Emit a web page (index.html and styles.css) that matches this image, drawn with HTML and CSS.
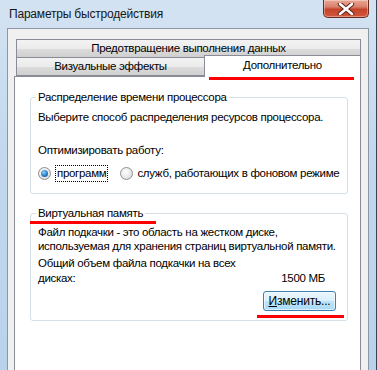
FILE: index.html
```html
<!DOCTYPE html>
<html lang="ru">
<head>
    <meta charset="UTF-8">
    <meta name="viewport" content="width=device-width, initial-scale=1.0">
    <title>Параметры быстродействия</title>
    <link rel="stylesheet" href="styles.css">
</head>
<body>

    <div class="window">
        <div class="titlebar">
            <span class="title">Параметры быстродействия</span>
            <div class="close-btn">
                <svg width="18" height="12" viewBox="0 0 18 12">
                    <path d="M3 1 L15 11 M15 1 L3 11" stroke="#5a1f14" stroke-width="4.5" stroke-linecap="round"/>
                    <path d="M3 1 L15 11 M15 1 L3 11" stroke="#ffffff" stroke-width="2.6" stroke-linecap="round"/>
                </svg>
            </div>
        </div>

        <div class="client">
            <div class="tabs">
                <div class="tab-row">
                    <div class="tab full">Предотвращение выполнения данных</div>
                </div>
                <div class="tab-row">
                    <div class="tab visual">Визуальные эффекты</div>
                    <div class="tab active">Дополнительно</div>
                </div>
            </div>

            <div class="panel">
                <!-- Процессор -->
                <fieldset class="group">
                    <legend>Распределение времени процессора</legend>
                    <p class="hint">Выберите способ распределения ресурсов процессора.</p>
                    <p class="optimize">Оптимизировать работу:</p>
                    <div class="radios">
                        <label class="radio checked"><span class="dot"></span><span class="focus">программ</span></label>
                        <label class="radio"><span class="dot"></span><span class="plain">служб, работающих в фоновом режиме</span></label>
                    </div>
                </fieldset>

                <!-- Виртуальная память -->
                <fieldset class="group vm">
                    <legend class="marked">Виртуальная память</legend>
                    <p class="hint">Файл подкачки - это область на жестком диске,<br>используемая для хранения страниц виртуальной памяти.</p>
                    <p class="total">Общий объем файла подкачки на всех</p>
                    <div class="total-row">
                        <span>дисках:</span>
                        <span>1500 МБ</span>
                    </div>
                    <div class="actions">
                        <button class="change-btn"><u>И</u>зменить...</button>
                    </div>
                </fieldset>
            </div>
        </div>
    </div>

</body>
</html>
```

FILE: styles.css
```css
body {
    margin: 0;
    width: 377px;
    height: 370px;
    overflow: hidden;
    font-family: "Liberation Sans", Arial, sans-serif;
    font-size: 11.5px;
    letter-spacing: -0.3px;
    line-height: 15px;
    color: #000;
    white-space: nowrap;
}

.window {
    height: 370px;
    display: flex;
    flex-direction: column;
    background: linear-gradient(to bottom, #d4e3f2 0%, #c3d8ee 40%, #b9d2ec 100%);
    border-right: 1px solid #3a4350;
    box-sizing: border-box;
}

.titlebar {
    height: 28px;
    display: flex;
    align-items: flex-start;
    justify-content: space-between;
    padding-left: 9px;
    flex-shrink: 0;
}

.title {
    margin-top: 7px;
    color: #151515;
    font-size: 12px;
    letter-spacing: -0.2px;
}

.close-btn {
    width: 46px;
    height: 18px;
    margin-right: 7px;
    box-sizing: border-box;
    border: 1px solid #6b2a1f;
    border-top: none;
    border-radius: 0 0 5px 5px;
    background: linear-gradient(to bottom, #e9a795 0%, #d9826c 40%, #c5432a 55%, #d2573c 100%);
    box-shadow: inset 0 0 0 1px rgba(255, 255, 255, 0.35);
    display: flex;
    justify-content: center;
    align-items: center;
}

.client {
    flex: 1;
    display: flex;
    flex-direction: column;
    margin: 0 7px 0 7px;
    padding: 10px 7px 0 6px;
    background-color: #f0f0f0;
    border: 1px solid #8b97a6;
    border-bottom: none;
    min-height: 0;
}

.tabs {
    margin-left: 2px;
    position: relative;
    z-index: 2;
}

.tab-row {
    display: flex;
    align-items: flex-end;
}

.tab {
    box-sizing: border-box;
    height: 19px;
    border: 1px solid #898c95;
    background: linear-gradient(to bottom, #f3f3f3 0%, #ebebeb 50%, #dddddd 51%, #cfcfcf 100%);
    text-align: center;
    line-height: 17px;
    color: #000;
}

.tab.full {
    flex: 1;
    height: 18px;
    border-bottom: none;
}

.tab.visual {
    width: 188px;
    border-right: none;
}

.tab.active {
    flex: 1;
    height: 22px;
    margin-top: -3px;
    margin-bottom: -1px;
    background: #ffffff;
    border-bottom: none;
    line-height: 19px;
    position: relative;
}

.tab.active::after {
    content: "";
    position: absolute;
    left: 4px;
    right: 6px;
    top: 21px;
    height: 3px;
    background: #f00;
}

.panel {
    flex: 1;
    background: #fff;
    border: 1px solid #898c95;
    border-bottom: none;
    margin-right: 0;
    padding: 13px 12px 0 15px;
}

.group {
    margin: 0;
    min-width: 0;
    padding: 0 7px 11px 7px;
    border: 1px solid #d5dfe5;
    border-radius: 3px;
}

.group legend {
    padding: 0 2px;
    margin-left: -2px;
    line-height: 15px;
}

.group p {
    margin: 0;
    line-height: 15px;
}

.hint {
    padding-top: 5px;
}

.vm .hint {
    line-height: 14px !important;
    padding-top: 4px;
}

.optimize {
    margin-top: 18px !important;
}

.radios {
    display: flex;
    align-items: center;
    margin-top: 7px;
    line-height: 15px;
}

.radio {
    display: flex;
    align-items: center;
}

.radio + .radio {
    margin-left: 12px;
}

.dot {
    width: 11px;
    height: 11px;
    border-radius: 50%;
    border: 1px solid #8f8f8f;
    background: radial-gradient(circle at 40% 35%, #ffffff 0%, #e6e6e6 60%, #cfcfcf 100%);
    margin-right: 4px;
    position: relative;
}

.radio.checked .dot::after {
    content: "";
    position: absolute;
    left: 2px;
    top: 2px;
    width: 7px;
    height: 7px;
    border-radius: 50%;
    background: radial-gradient(circle at 40% 35%, #8fd1fb 0%, #2b7cc8 55%, #133e78 100%);
}

.focus {
    border: 1px dotted #000;
    padding: 0 1px;
}

.vm {
    margin-top: 12px;
    padding-bottom: 9px;
}

.marked {
    position: relative;
}

.marked::after {
    content: "";
    position: absolute;
    left: -6px;
    right: -11px;
    top: 15px;
    height: 3px;
    background: #f00;
}

.total {
    margin-top: 3px !important;
}

.total-row {
    display: flex;
    justify-content: space-between;
    padding-right: 15px;
    line-height: 15px;
}

.actions {
    display: flex;
    justify-content: flex-end;
    margin-top: 5px;
    padding-right: 4px;
    position: relative;
}

.actions::after {
    content: "";
    position: absolute;
    right: -4px;
    width: 87px;
    top: 24px;
    height: 3px;
    background: #f00;
}

.change-btn {
    width: 73px;
    height: 20px;
    padding: 0;
    font-family: inherit;
    font-size: 12px;
    letter-spacing: -0.2px;
    color: #000;
    border: 1px solid #3c7fb1;
    border-radius: 3px;
    background: linear-gradient(to bottom, #eaf6fd 0%, #d9f0fc 50%, #bee6fd 51%, #a7d9f5 100%);
    box-shadow: inset 0 0 0 1px rgba(255, 255, 255, 0.6);
}
```
